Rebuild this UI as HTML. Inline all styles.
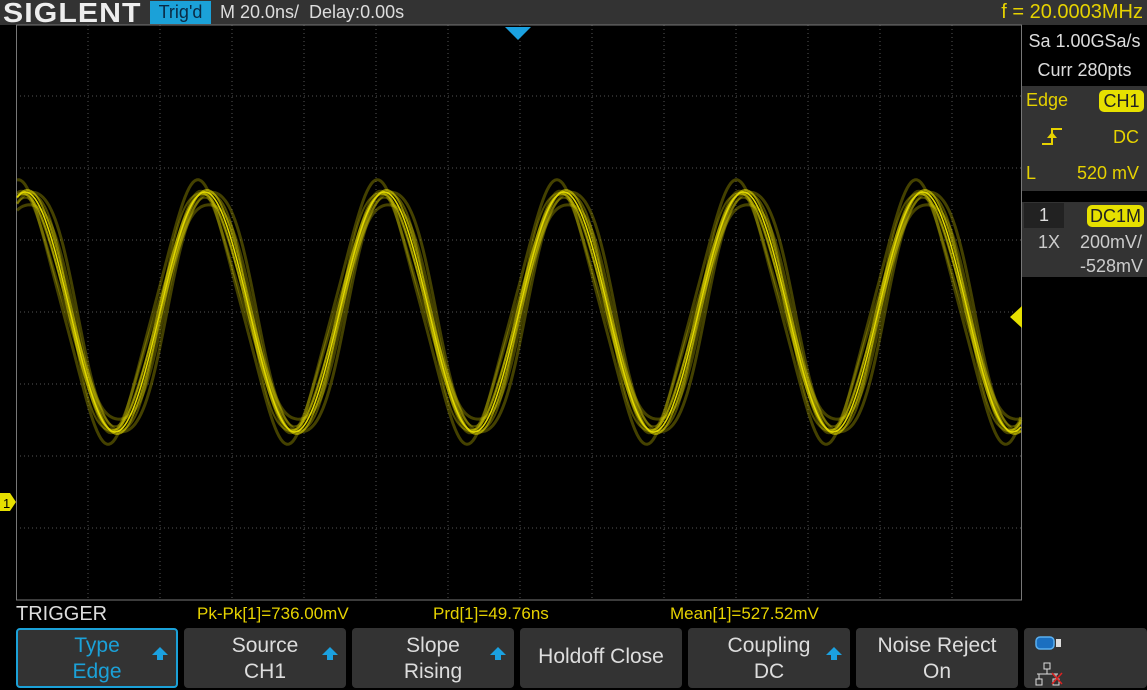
<!DOCTYPE html>
<html><head><meta charset="utf-8"><style>
html,body{margin:0;padding:0;background:#000;width:1147px;height:690px;overflow:hidden;font-family:"Liberation Sans",sans-serif}
.abs{position:absolute}
.top{left:0;top:0;width:1147px;height:25px;background:#333}
.key{position:absolute;top:628px;width:162px;height:60px;background:#333;border-radius:4px;color:#ddd;font-size:21px;text-align:center;line-height:26px;box-sizing:border-box;padding-top:5px}
.arr{position:absolute;right:8px;top:19px;width:0;height:0;border-left:8px solid transparent;border-right:8px solid transparent;border-bottom:8px solid #1ba1e0}
.arr:after{content:"";position:absolute;left:-3px;top:8px;width:6px;height:5px;background:#1ba1e0}
</style></head><body>
<div class="abs top"></div>
<div class="abs" style="left:3px;top:-3px;font-size:28px;font-weight:bold;color:#eee;letter-spacing:1px;transform:scaleX(1.08);transform-origin:left">SIGLENT</div>
<div class="abs" style="left:150px;top:1px;width:61px;height:23px;background:#1ba1d8;color:#0a2a44;font-size:18px;line-height:23px;text-align:center">Trig'd</div>
<div class="abs" style="left:220px;top:1px;font-size:18px;color:#ddd;line-height:23px">M 20.0ns/&nbsp; Delay:0.00s</div>
<div class="abs" style="right:4px;top:1px;font-size:20px;color:#e6d200;line-height:23px">f = 20.0003MHz</div>

<svg class="abs" style="left:0;top:0" width="1147" height="690">
<g stroke="#555" stroke-width="1" stroke-dasharray="1,3" id="grid"></g>
<rect x="16.5" y="25" width="1005" height="575" fill="none" stroke="#777"/>
<polygon points="505,27 531,27 518,40" fill="#1ba1e0"/>
<polygon points="1022,306 1022,328 1010,317" fill="#e6e000"/>
<polygon points="0,493 10,493 16,502 10,511 0,511" fill="#e6e000"/>
<text x="3" y="508" font-size="13" fill="#000" font-family="Liberation Sans">1</text>
<g id="wave" fill="none" stroke-linejoin="round"></g>
</svg>

<div class="abs" style="left:1022px;top:27px;width:125px;height:60px;color:#ddd;font-size:18px;text-align:center;line-height:29px">Sa 1.00GSa/s<br>Curr 280pts</div>
<div class="abs" style="left:1022px;top:86px;width:125px;height:105px;background:#333"></div>
<div class="abs" style="left:1026px;top:90px;font-size:18px;color:#e6d200">Edge</div>
<div class="abs" style="left:1099px;top:90px;width:45px;height:22px;background:#e6e000;border-radius:5px;color:#222;font-size:18px;text-align:center;line-height:22px">CH1</div>
<svg class="abs" style="left:1040px;top:125px" width="24" height="22"><path d="M2 19H12V4H22" stroke="#e6d200" stroke-width="2" fill="none"/><path d="M7 13L12 7L17 13Z" fill="#e6d200"/></svg>
<div class="abs" style="left:1113px;top:127px;font-size:18px;color:#e6d200">DC</div>
<div class="abs" style="left:1026px;top:163px;font-size:18px;color:#e6d200">L</div>
<div class="abs" style="left:1077px;top:163px;font-size:18px;color:#e6d200">520 mV</div>
<div class="abs" style="left:1022px;top:202px;width:125px;height:75px;background:#333"></div>
<div class="abs" style="left:1024px;top:203px;width:40px;height:25px;background:#222;color:#ddd;font-size:18px;text-align:center;line-height:25px">1</div>
<div class="abs" style="left:1087px;top:205px;width:57px;height:22px;background:#e6e000;border-radius:5px;color:#222;font-size:18px;text-align:center;line-height:22px">DC1M</div>
<div class="abs" style="left:1038px;top:232px;font-size:18px;color:#ccc">1X</div>
<div class="abs" style="left:1080px;top:232px;font-size:18px;color:#ccc">200mV/</div>
<div class="abs" style="left:1080px;top:256px;font-size:18px;color:#ccc">-528mV</div>

<div class="abs" style="left:16px;top:603px;font-size:20px;color:#ddd">TRIGGER</div>
<div class="abs" style="left:197px;top:604px;font-size:17px;color:#e6d200">Pk-Pk[1]=736.00mV</div>
<div class="abs" style="left:433px;top:604px;font-size:17px;color:#e6d200">Prd[1]=49.76ns</div>
<div class="abs" style="left:670px;top:604px;font-size:17px;color:#e6d200">Mean[1]=527.52mV</div>

<div class="key" style="left:16px;border:2px solid #1ba1d8;color:#1ba1d8;padding-top:3px">Type<br>Edge<div class="arr" style="top:17px"></div></div>
<div class="key" style="left:184px">Source<br>CH1<div class="arr"></div></div>
<div class="key" style="left:352px">Slope<br>Rising<div class="arr"></div></div>
<div class="key" style="left:520px;line-height:50px;padding-top:4px">Holdoff Close</div>
<div class="key" style="left:688px">Coupling<br>DC<div class="arr"></div></div>
<div class="key" style="left:856px">Noise Reject<br>On</div>
<div class="key" style="left:1024px;width:123px"></div>
<svg class="abs" style="left:1034px;top:634px" width="35" height="52">
<rect x="2" y="3" width="18" height="12" rx="4" fill="#1a6fc0" stroke="#5ab0f0" stroke-width="1.5"/>
<rect x="22" y="5" width="5" height="8" fill="#ddd"/>
<rect x="10" y="29" width="6" height="6" fill="none" stroke="#ddd"/>
<path d="M13 35V40M3 40H24M5 40V45M22 40V45" stroke="#ddd" fill="none"/>
<rect x="2" y="45" width="6" height="6" fill="none" stroke="#ddd"/>
<rect x="19" y="45" width="6" height="6" fill="none" stroke="#ddd"/>
<path d="M18 39L28 50M28 39L18 50" stroke="#d22" stroke-width="1.5"/>
</svg>

<script>
var g=document.getElementById('grid'),s='';
for(var x=16+72;x<1021;x+=72)s+='<line x1="'+x+'" y1="25" x2="'+x+'" y2="600"/>';
for(var y=312-216;y<600;y+=72)s+='<line x1="16" y1="'+y+'" x2="1021" y2="'+y+'"/>';
g.innerHTML=s;
var w=document.getElementById('wave'),o='';
// [phase shift px, amplitude delta, opacity, width, 3rd harmonic]
var tr=[[-7,6,0.3,3,0.05],[7,6,0.3,3,-0.05],[-4,-6,0.3,3,0.06],[4,-6,0.3,3,-0.06],[0,10,0.35,2,0.08],[0,-10,0.35,2,-0.04],[-2,2,0.6,2,0],[2,-2,0.6,2,0],[0,0,1,1.6,0]];
tr.forEach(function(p){
 var d='';
 for(var x=17;x<=1021;x+=2){
  var ph=2*Math.PI*(x-519+p[0])/179.5;
  var yy=312-(120+p[1])*(Math.sin(ph)+p[4]*Math.sin(3*ph));
  d+=(x==17?'M':'L')+x+' '+yy.toFixed(1);
 }
 o+='<path d="'+d+'" stroke="rgb(225,215,0)" stroke-opacity="'+p[2]+'" stroke-width="'+p[3]+'"/>';
});
w.innerHTML=o;
</script>
</body></html>
